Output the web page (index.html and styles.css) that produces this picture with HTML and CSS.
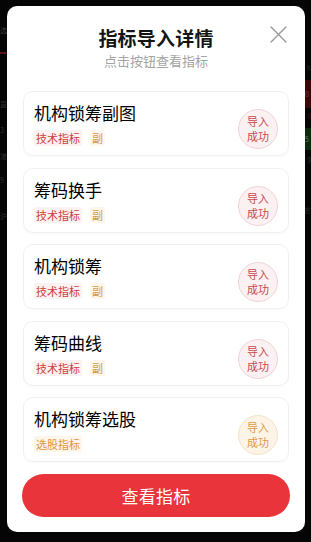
FILE: index.html
```html
<!DOCTYPE html>
<html lang="zh-CN">
<head>
<meta charset="utf-8">
<title>指标导入详情</title>
<link rel="stylesheet" href="styles.css">
</head>
<body>
<div class="page">
  <div class="backdrop">
    <div class="bg-col bg-left">
      <span class="bg-ch c1">选</span>
      <span class="bg-line"></span>
      <span class="bg-ch c2">直</span>
      <span class="bg-ch c3">3</span>
      <span class="bg-ch c4">港</span>
      <span class="bg-ch c5">9</span>
      <span class="bg-ch c6">沪</span>
    </div>
    <div class="bg-col bg-right">
      <span class="bg-ch r1">K</span>
      <span class="bg-blk red">0</span>
      <span class="bg-ch r2">8</span>
      <span class="bg-blk green">5</span>
      <span class="bg-ch r3">9</span>
      <span class="bg-ch r4">言</span>
    </div>
  </div>

  <div class="modal">
    <div class="modal-head">
      <h1 class="modal-title">指标导入详情</h1>
      <p class="modal-sub">点击按钮查看指标</p>
      <button class="close" aria-label="关闭">
        <svg viewBox="0 0 16 16" width="17" height="17"><path d="M1 1 L15 15 M15 1 L1 15" stroke="#9a9a9a" stroke-width="1.3" fill="none" stroke-linecap="round"/></svg>
      </button>
    </div>

    <div class="list">
      <div class="card">
        <div class="card-main">
          <div class="card-title">机构锁筹副图</div>
          <div class="tags"><span class="tag tag-red">技术指标</span><span class="tag tag-gold">副</span></div>
        </div>
        <div class="stamp stamp-red"><span>导入</span><span>成功</span></div>
      </div>
      <div class="card">
        <div class="card-main">
          <div class="card-title">筹码换手</div>
          <div class="tags"><span class="tag tag-red">技术指标</span><span class="tag tag-gold">副</span></div>
        </div>
        <div class="stamp stamp-red"><span>导入</span><span>成功</span></div>
      </div>
      <div class="card">
        <div class="card-main">
          <div class="card-title">机构锁筹</div>
          <div class="tags"><span class="tag tag-red">技术指标</span><span class="tag tag-gold">副</span></div>
        </div>
        <div class="stamp stamp-red"><span>导入</span><span>成功</span></div>
      </div>
      <div class="card">
        <div class="card-main">
          <div class="card-title">筹码曲线</div>
          <div class="tags"><span class="tag tag-red">技术指标</span><span class="tag tag-gold">副</span></div>
        </div>
        <div class="stamp stamp-red"><span>导入</span><span>成功</span></div>
      </div>
      <div class="card">
        <div class="card-main">
          <div class="card-title">机构锁筹选股</div>
          <div class="tags"><span class="tag tag-orange">选股指标</span></div>
        </div>
        <div class="stamp stamp-orange"><span>导入</span><span>成功</span></div>
      </div>
    </div>

    <button class="primary">查看指标</button>
  </div>
</div>
</body>
</html>
```

FILE: styles.css
```css
* { box-sizing: border-box; }
html, body { margin: 0; padding: 0; }
body {
  background: #050505;
  font-family: "Noto Sans CJK SC", "Noto Sans", sans-serif;
  width: 311px;
  height: 542px;
  overflow: hidden;
}
.page {
  position: relative;
  width: 311px;
  height: 542px;
  background: #050505;
}

/* dimmed page behind the overlay */
.backdrop {
  display: flex;
  justify-content: space-between;
  height: 100%;
}
.bg-col {
  display: flex;
  flex-direction: column;
  width: 7px;
  overflow: hidden;
}
.bg-left { align-items: flex-start; }
.bg-right { align-items: flex-end; width: 6px; }
.bg-ch {
  font-size: 7px;
  line-height: 12px;
  color: #2e2e2e;
}
.c1 { margin-top: 24px; color: #3a3a3a; }
.bg-line { display: block; width: 7px; height: 2px; background: #5a1416; margin-top: 16px; }
.c2 { margin-top: 44px; }
.c3 { margin-top: 14px; }
.c4 { margin-top: 14px; }
.c5 { margin-top: 12px; }
.c6 { margin-top: 24px; }
.r1 { margin-top: 62px; color: #222; }
.bg-blk {
  display: block;
  width: 6px;
  font-size: 7px;
  line-height: 12px;
  overflow: hidden;
}
.red { background: #3a0709; height: 28px; margin-top: 6px; padding-top: 8px; color: #7a3a3a; }
.r2 { color: #3a1010; margin-top: 2px; }
.green { background: #0c2a0e; height: 22px; margin-top: 6px; padding-top: 5px; color: #5a7a5a; }
.r3 { color: #1d3a2a; margin-top: 4px; }
.r4 { margin-top: 38px; color: #242424; }

/* modal */
.modal {
  position: absolute;
  left: 7px;
  top: 6px;
  width: 298px;
  height: 526px;
  background: #fff;
  border-radius: 10px;
  display: flex;
  flex-direction: column;
  padding: 20px 16px 15px;
}
.modal-head {
  position: relative;
  text-align: center;
}
.modal-title {
  margin: 0;
  font-size: 19px;
  line-height: 24px;
  font-weight: 700;
  color: #141414;
  letter-spacing: 0.2px;
}
.modal-sub {
  margin: 2px 0 0;
  font-size: 13px;
  line-height: 18px;
  color: #a3a3a3;
}
.close {
  position: absolute;
  right: 1px;
  top: -2px;
  width: 20px;
  height: 20px;
  padding: 0;
  border: 0;
  background: none;
  display: flex;
  align-items: center;
  justify-content: center;
}

.list {
  flex: 1;
  display: flex;
  flex-direction: column;
  gap: 11.5px;
  margin-top: 21px;
  overflow: hidden;
}
.card {
  flex: none;
  height: 65px;
  border: 1px solid #f0f0f0;
  border-radius: 10px;
  box-shadow: 0 1px 3px rgba(0,0,0,0.03);
  display: flex;
  justify-content: space-between;
  padding: 10px 10px 0 10px;
}
.card-main {
  display: flex;
  flex-direction: column;
}
.card-title {
  font-size: 17px;
  line-height: 22px;
  color: #000;
  font-weight: 400;
}
.tags {
  display: flex;
  gap: 8px;
  margin-top: 6px;
}
.tag {
  font-size: 11px;
  line-height: 16px;
  padding: 0 2px;
  border-radius: 2px;
}
.tag-red { color: #cf3b3e; background: #fdf2f2; }
.tag-gold { color: #d79b3e; background: #fdf6ea; }
.tag-orange { color: #e1953c; background: #fef6eb; }

.stamp {
  flex: none;
  width: 40px;
  height: 40px;
  border-radius: 50%;
  margin-top: 7px;
  display: flex;
  flex-direction: column;
  align-items: center;
  justify-content: center;
  font-size: 11px;
  line-height: 15px;
}
.stamp-red { background: #fcf1f2; border: 1px solid #f1d3d6; color: #c9484f; }
.stamp-orange { background: #fdf4e8; border: 1px solid #f5e2c9; color: #e09a48; }

.primary {
  flex: none;
  margin: 11px -1px 0 -1px;
  height: 43px;
  border: 0;
  border-radius: 22px;
  background: #e8343a;
  color: #fff;
  font-family: "Noto Sans CJK SC", "Noto Sans", sans-serif;
  font-size: 17px;
  font-weight: 400;
  letter-spacing: 0.3px;
}
```
